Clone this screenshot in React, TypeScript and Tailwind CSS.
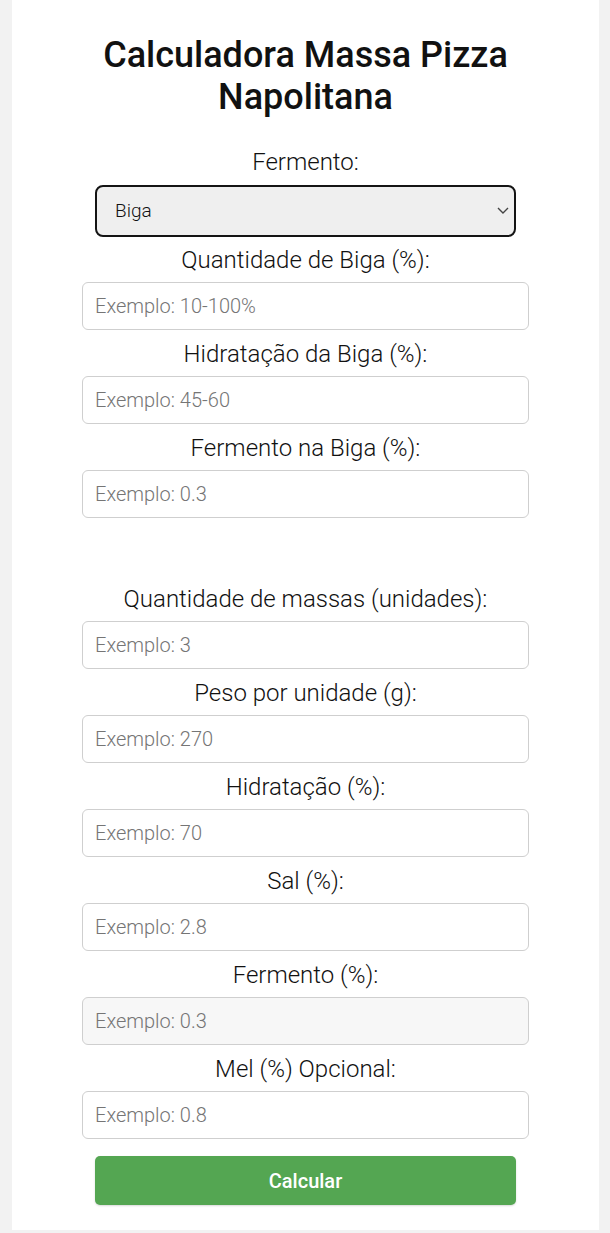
import React from "react";

const font = { fontFamily: "Roboto, 'Noto Sans', sans-serif" };

type Field = { label: string; placeholder: string; shaded?: boolean };

const bigaFields: Field[] = [
  { label: "Quantidade de Biga (%):", placeholder: "Exemplo: 10-100%" },
  { label: "Hidratação da Biga (%):", placeholder: "Exemplo: 45-60" },
  { label: "Fermento na Biga (%):", placeholder: "Exemplo: 0.3" },
];

const massaFields: Field[] = [
  { label: "Peso por unidade (g):", placeholder: "Exemplo: 270" },
  { label: "Hidratação (%):", placeholder: "Exemplo: 70" },
  { label: "Sal (%):", placeholder: "Exemplo: 2.8" },
  { label: "Fermento (%):", placeholder: "Exemplo: 0.3", shaded: true },
  { label: "Mel (%) Opcional:", placeholder: "Exemplo: 0.8" },
];

function FieldInput({ placeholder, shaded }: { placeholder: string; shaded?: boolean }) {
  return (
    <input
      type="text"
      placeholder={placeholder}
      className={`block w-[447px] h-[48px] mx-auto rounded-[6px] border border-[#cfcfcf] px-[12px] text-[20px] font-light text-[#222] placeholder:text-[#757575] outline-none ${
        shaded ? "bg-[#f7f7f7]" : "bg-white"
      }`}
      style={font}
    />
  );
}

function Label({ children, className = "" }: { children: React.ReactNode; className?: string }) {
  return (
    <label className={`block text-center text-[24px] leading-[26px] font-light text-[#111] ${className}`}>
      {children}
    </label>
  );
}

export default function App() {
  return (
    <div className="min-h-[1233px] bg-[#f2f2f2]" style={font}>
      <div className="mx-[12px] w-[587px] bg-white pt-[34px] pb-[25px]">
        {/* TITLE */}
        <h1 className="text-center text-[36px] leading-[42px] font-medium text-[#111]">
          Calculadora Massa Pizza
          <br />
          Napolitana
        </h1>

        {/* FERMENTO TYPE */}
        <Label className="mt-[31px] mb-[10px]">Fermento:</Label>
        <div className="relative w-[421px] mx-auto">
          <select
            defaultValue="biga"
            className="block w-full h-[52px] appearance-none rounded-[8px] border-[2.5px] border-[#141414] bg-[#efefef] pl-[18px] text-[19px] font-light text-[#111] outline-none"
            style={font}
          >
            <option value="biga">Biga</option>
            <option value="direto">Direto</option>
            <option value="poolish">Poolish</option>
          </select>
          <svg
            className="pointer-events-none absolute right-[7px] top-[20px]"
            width="12"
            height="10"
            viewBox="0 0 12 10"
            fill="none"
          >
            <path d="M1 3l5 5 5-5" stroke="#444" strokeWidth="1.4" />
          </svg>
        </div>

        {/* BIGA */}
        {bigaFields.map((f, i) => (
          <div key={f.label}>
            <Label className={i === 0 ? "mt-[10px] mb-[9px]" : "mt-[11px] mb-[9px]"}>{f.label}</Label>
            <FieldInput placeholder={f.placeholder} />
          </div>
        ))}

        {/* MASSA */}
        <Label className="mt-[68px] mb-[9px]">Quantidade de massas (unidades):</Label>
        <FieldInput placeholder="Exemplo: 3" />
        {massaFields.map((f) => (
          <div key={f.label}>
            <Label className="mt-[11px] mb-[9px]">{f.label}</Label>
            <FieldInput placeholder={f.placeholder} shaded={f.shaded} />
          </div>
        ))}

        <button
          className="block w-[421px] h-[49px] mx-auto mt-[17px] rounded-[5px] bg-[#54a652] text-white text-[20px] font-medium shadow-[0_1px_2px_rgba(0,0,0,0.15)]"
          style={font}
        >
          Calcular
        </button>
      </div>
    </div>
  );
}
